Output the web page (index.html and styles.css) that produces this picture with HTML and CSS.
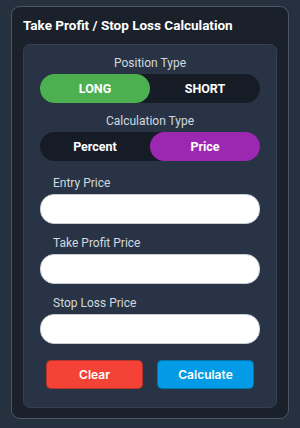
FILE: index.html
```html
<!DOCTYPE html>
<html lang="en">
<head>
    <meta charset="UTF-8">
    <title>Take Profit / Stop Loss Calculation</title>
    <link rel="stylesheet" href="styles.css">
</head>
<body>
    <div class="card">
        <h1 class="title">Take Profit / Stop Loss Calculation</h1>

        <div class="panel">
            <div class="field-title">Position Type</div>
            <div class="toggle">
                <button class="toggle-btn active-long">LONG</button>
                <button class="toggle-btn">SHORT</button>
            </div>

            <div class="field-title spaced">Calculation Type</div>
            <div class="toggle">
                <button class="toggle-btn">Percent</button>
                <button class="toggle-btn active-price">Price</button>
            </div>

            <label class="input-label first">Entry Price</label>
            <input type="text" class="price-input">

            <label class="input-label">Take Profit Price</label>
            <input type="text" class="price-input">

            <label class="input-label">Stop Loss Price</label>
            <input type="text" class="price-input">

            <div class="actions">
                <button class="action-btn clear">Clear</button>
                <button class="action-btn calc">Calculate</button>
            </div>
        </div>
    </div>
</body>
</html>
```

FILE: styles.css
```css
:root {
    --page-bg: #263140;
    --card-bg: #1a212b;
    --card-border: #4b5768;
    --panel-bg: #283445;
    --panel-border: #35414f;
    --toggle-bg: #161c25;
    --text-light: #d3d8de;
    --green: #4caf50;
    --purple: #9c27b0;
    --red: #f44336;
    --blue: #039be5;
}

* {
    box-sizing: border-box;
    margin: 0;
    padding: 0;
}

body {
    font-family: Roboto, "Liberation Sans", sans-serif;
    background-color: var(--page-bg);
    color: #ffffff;
    padding: 6px 11px;
}

.card {
    width: 278px;
    height: 413px;
    background: var(--card-bg);
    border: 1px solid var(--card-border);
    border-radius: 9px;
    padding: 9px 11px 0;
}

.title {
    font-size: 13.5px;
    font-weight: 700;
    line-height: 18px;
    margin-bottom: 10px;
}

.panel {
    background: var(--panel-bg);
    border: 1px solid var(--panel-border);
    border-radius: 7px;
    padding: 11px 16px 18px;
}

.field-title {
    text-align: center;
    font-size: 12px;
    line-height: 14px;
    color: var(--text-light);
    margin-bottom: 4px;
}

.field-title.spaced {
    margin-top: 11px;
}

.toggle {
    display: flex;
    height: 29px;
    background: var(--toggle-bg);
    border-radius: 15px;
}

.toggle-btn {
    flex: 1;
    border: none;
    background: transparent;
    color: #ffffff;
    font-family: inherit;
    font-size: 12.5px;
    font-weight: 700;
    border-radius: 15px;
}

.active-long {
    background: var(--green);
}

.active-price {
    background: var(--purple);
}

.input-label {
    display: block;
    font-size: 12px;
    line-height: 14px;
    color: var(--text-light);
    padding-left: 13px;
    margin: 12px 0 4px;
}

.input-label.first {
    margin-top: 15px;
}

.price-input {
    display: block;
    width: 100%;
    height: 30px;
    border: 1px solid #c9ced6;
    border-radius: 14px;
    background: #ffffff;
}

.actions {
    display: flex;
    gap: 14px;
    padding: 0 6px;
    margin-top: 16px;
}

.action-btn {
    flex: 1;
    height: 29px;
    border: 1px solid rgba(0, 0, 0, 0.25);
    border-radius: 5px;
    color: #ffffff;
    font-family: Inter, Roboto, sans-serif;
    font-size: 12px;
    font-weight: 600;
}

.clear {
    background: var(--red);
}

.calc {
    background: var(--blue);
}
```
